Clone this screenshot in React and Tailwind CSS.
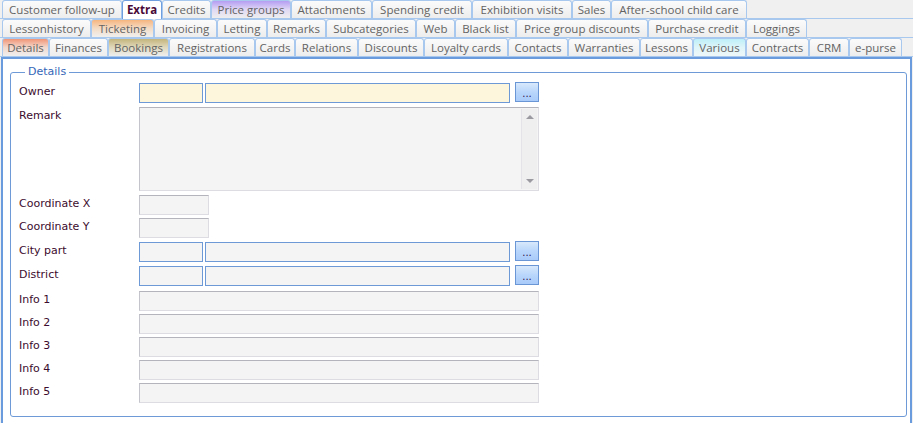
import React from "react";

const ROW1 = [
  { t: "Customer follow-up", w: 120 },
  { t: "Extra", w: 40, active: true },
  { t: "Credits", w: 49 },
  { t: "Price groups", w: 80, v: "purple" },
  { t: "Attachments", w: 81 },
  { t: "Spending credit", w: 100 },
  { t: "Exhibition visits", w: 100 },
  { t: "Sales", w: 39 },
  { t: "After-school child care", w: 136 },
];

const ROW2 = [
  { t: "Lessonhistory", w: 89 },
  { t: "Ticketing", w: 63, v: "orange" },
  { t: "Invoicing", w: 63 },
  { t: "Letting", w: 50 },
  { t: "Remarks", w: 59 },
  { t: "Subcategories", w: 90 },
  { t: "Web", w: 39 },
  { t: "Black list", w: 61 },
  { t: "Price group discounts", w: 132 },
  { t: "Purchase credit", w: 98 },
  { t: "Loggings", w: 61 },
];

const ROW3 = [
  { t: "Details", w: 47, v: "red" },
  { t: "Finances", w: 59 },
  { t: "Bookings", w: 61, v: "olive" },
  { t: "Registrations", w: 86 },
  { t: "Cards", w: 40 },
  { t: "Relations", w: 63 },
  { t: "Discounts", w: 66 },
  { t: "Loyalty cards", w: 84 },
  { t: "Contacts", w: 60 },
  { t: "Warranties", w: 72 },
  { t: "Lessons", w: 53 },
  { t: "Various", w: 53, v: "cyan" },
  { t: "Contracts", w: 63 },
  { t: "CRM", w: 40 },
  { t: "e-purse", w: 53 },
];

const variants = {
  plain: "bg-gradient-to-b from-[#fbfbfb] to-[#ededed]",
  purple: "bg-gradient-to-b from-[#b59df2] via-[#e0d8f4] to-[#eeeeee]",
  orange: "bg-gradient-to-b from-[#f6b57e] via-[#f3dcc6] to-[#efefef]",
  red: "bg-gradient-to-b from-[#ef9577] via-[#f2d8cc] to-[#efefef]",
  olive: "bg-gradient-to-b from-[#c4b57c] via-[#e0d9bd] to-[#eeeeee]",
  cyan: "bg-gradient-to-b from-[#bdeff9] via-[#dff5f9] to-[#eef7f8]",
};

function Tab({ t, w, v = "plain", active }) {
  if (active) {
    return (
      <div
        className="h-[19px] flex items-center justify-center border border-b-0 border-[#6f9fde] rounded-t-[3px] bg-white text-[#4a0a38] font-bold text-[11.5px] -mb-px relative z-10"
        style={{ width: w }}
      >
        {t}
      </div>
    );
  }
  return (
    <div
      className={`h-[18px] flex items-center justify-center border border-b-0 border-[#a8c8ee] rounded-t-[3px] text-[#636363] text-[11.5px] ${variants[v]}`}
      style={{ width: w }}
    >
      {t}
    </div>
  );
}

function TabRow({ tabs }) {
  return (
    <div className="flex pl-[2px] border-b border-[#a8c8ee]">
      {tabs.map((tb) => (
        <Tab key={tb.t} {...tb} />
      ))}
    </div>
  );
}

function Label({ children }) {
  return <div className="w-[120px] shrink-0 pt-[1px] text-[#3c0c2e] leading-[16px]">{children}</div>;
}

function DotsButton() {
  return (
    <div className="ml-[5px] -mt-px w-[24px] h-[20px] border border-[#6a96d6] bg-gradient-to-b from-[#d8e9fb] via-[#b9d6fb] to-[#a9cbfa] flex items-end justify-center pb-[3px] text-[10px] leading-[8px] text-[#30104a]">
      ...
    </div>
  );
}

const blueBox = "h-[20px] border border-[#6d99d6]";
const greyBox = "h-[20px] bg-[#f4f4f4] border border-[#dcdce2] border-t-[#b4b4bc] border-l-[#c4c4cc]";

function Row({ label, mt, children }) {
  return (
    <div className="flex items-start" style={{ marginTop: mt }}>
      <Label>{label}</Label>
      {children}
    </div>
  );
}

export default function App() {
  return (
    <div
      className="w-[913px] h-[423px] bg-[#f0f0f0] overflow-hidden text-[11px]"
      style={{ fontFamily: "'Open Sans', 'DejaVu Sans', sans-serif" }}
    >
      <div>
        <TabRow tabs={ROW1} />
        <TabRow tabs={ROW2} />
        <TabRow tabs={ROW3} />
      </div>
      <div className="ml-[1px] w-[911px] h-[370px] bg-white border-x-2 border-t-2 border-[#6a9bdc] pl-[7px] pr-[3px] pt-[7px]">
        <fieldset
          className="border border-[#6e9bd8] rounded-[3px] h-[351px] pl-[8px] pr-[4px]"
          style={{ fontFamily: "'DejaVu Sans', Verdana, sans-serif" }}
        >
          <legend className="ml-[6px] px-[3px] text-[#3566b8] text-[11px] leading-[12px]">Details</legend>
          <Row label="Owner" mt={5}>
            <div className={`${blueBox} w-[64px] bg-[#fef6dc]`} />
            <div className={`${blueBox} ml-[2px] w-[305px] bg-[#fef6dc]`} />
            <DotsButton />
          </Row>
          <Row label="Remark" mt={4}>
            <div className="w-[400px] h-[84px] bg-[#f4f4f4] border border-[#dcdce2] border-t-[#b4b4bc] border-l-[#c4c4cc] flex justify-end p-[1px]">
              <div className="w-[16px] h-full bg-[#efeff0] border-l border-[#e4e4e8] flex flex-col items-center justify-between py-[6px]">
                <div className="w-0 h-0 border-x-[4px] border-x-transparent border-b-[4px] border-b-[#9a9aa0]" />
                <div className="w-0 h-0 border-x-[4px] border-x-transparent border-t-[4px] border-t-[#9a9aa0]" />
              </div>
            </div>
          </Row>
          <Row label="Coordinate X" mt={4}>
            <div className={`${greyBox} w-[70px]`} />
          </Row>
          <Row label="Coordinate Y" mt={3}>
            <div className={`${greyBox} w-[70px]`} />
          </Row>
          <Row label="City part" mt={4}>
            <div className={`${blueBox} w-[64px] bg-[#f4f4f4]`} />
            <div className={`${blueBox} ml-[2px] w-[305px] bg-[#f4f4f4]`} />
            <DotsButton />
          </Row>
          <Row label="District" mt={4}>
            <div className={`${blueBox} w-[64px] bg-[#f4f4f4]`} />
            <div className={`${blueBox} ml-[2px] w-[305px] bg-[#f4f4f4]`} />
            <DotsButton />
          </Row>
          <Row label="Info 1" mt={5}>
            <div className={`${greyBox} w-[400px]`} />
          </Row>
          <Row label="Info 2" mt={3}>
            <div className={`${greyBox} w-[400px]`} />
          </Row>
          <Row label="Info 3" mt={3}>
            <div className={`${greyBox} w-[400px]`} />
          </Row>
          <Row label="Info 4" mt={3}>
            <div className={`${greyBox} w-[400px]`} />
          </Row>
          <Row label="Info 5" mt={3}>
            <div className={`${greyBox} w-[400px]`} />
          </Row>
        </fieldset>
      </div>
    </div>
  );
}
